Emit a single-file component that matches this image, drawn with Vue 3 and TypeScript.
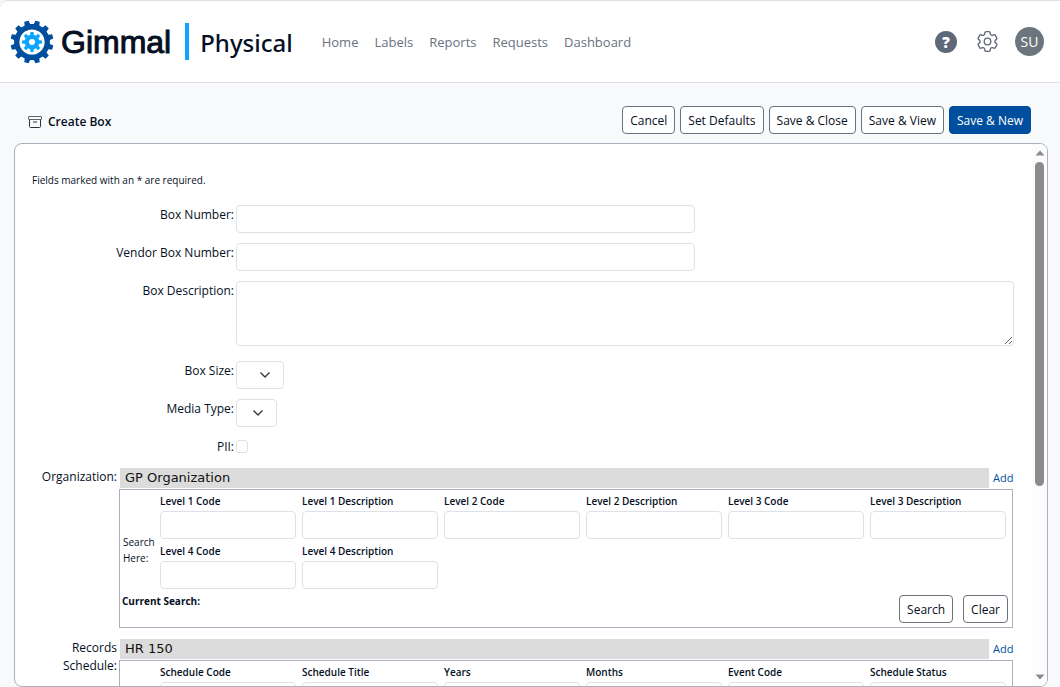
<script setup lang="ts">
import { ref } from 'vue'

interface SearchSection {
  id: string
  label: string
  value: string
  fields: string[]
}

const navLinks: string[] = ['Home', 'Labels', 'Reports', 'Requests', 'Dashboard']
const actions: string[] = ['Cancel', 'Set Defaults', 'Save & Close', 'Save & View']

const sections: SearchSection[] = [
  {
    id: 'org',
    label: 'Organization:',
    value: 'GP Organization',
    fields: [
      'Level 1 Code', 'Level 1 Description', 'Level 2 Code', 'Level 2 Description',
      'Level 3 Code', 'Level 3 Description', 'Level 4 Code', 'Level 4 Description',
    ],
  },
  {
    id: 'schedule',
    label: 'Records Schedule:',
    value: 'HR 150',
    fields: ['Schedule Code', 'Schedule Title', 'Years', 'Months', 'Event Code', 'Schedule Status'],
  },
]

const boxNumber = ref('')
const vendorBoxNumber = ref('')
const description = ref('')
const pii = ref(false)

/** Outline of a cog centred on 0,0. */
function cog(teeth: number, outer: number, root: number, offset: number): string {
  const step = (Math.PI * 2) / teeth
  const points: string[] = []
  for (let i = 0; i < teeth; i++) {
    const a = offset + i * step
    const corners: [number, number][] = [
      [root, -0.3], [outer, -0.2], [outer, 0.2], [root, 0.3],
    ]
    for (const [r, k] of corners) {
      const t = a + k * step
      points.push(`${(r * Math.sin(t)).toFixed(2)} ${(-r * Math.cos(t)).toFixed(2)}`)
    }
  }
  return `M${points.join('L')}Z`
}

const outerCog = cog(12, 21.6, 18, Math.PI / 12)
const innerCog = cog(8, 10.2, 7.4, 0)
</script>

<template>
  <div class="page">
    <header class="topbar">
      <a class="brand" href="#">
        <svg class="brand-mark" viewBox="-22 -22 44 44" aria-hidden="true">
          <path :d="outerCog" fill="#004f9e" />
          <circle r="12.6" fill="#fff" />
          <path :d="innerCog" fill="#0ba5ff" />
          <circle r="3" fill="#fff" />
        </svg>
        <span class="brand-name">Gimmal</span>
        <span class="brand-rule"></span>
        <span class="brand-product">Physical</span>
      </a>
      <nav class="nav">
        <a v-for="link in navLinks" :key="link" href="#">{{ link }}</a>
      </nav>
      <div class="tools">
        <button type="button" class="help" aria-label="Help">?</button>
        <button type="button" class="settings" aria-label="Settings">
          <svg viewBox="1.5 1.5 21 21" fill="none" stroke="currentColor" stroke-width="1.2" stroke-linejoin="round">
            <path d="M9.594 3.94c.09-.542.56-.94 1.11-.94h2.593c.55 0 1.02.398 1.11.94l.213 1.281c.063.374.313.686.645.87.074.04.147.083.22.127.325.196.72.257 1.075.124l1.217-.456a1.125 1.125 0 0 1 1.37.49l1.296 2.247a1.125 1.125 0 0 1-.26 1.431l-1.003.827c-.293.241-.438.613-.43.992a7.723 7.723 0 0 1 0 .255c-.008.378.137.75.43.991l1.004.827c.424.35.534.955.26 1.43l-1.298 2.247a1.125 1.125 0 0 1-1.369.491l-1.217-.456c-.355-.133-.75-.072-1.076.124a6.47 6.47 0 0 1-.22.128c-.331.183-.581.495-.644.869l-.213 1.281c-.09.543-.56.94-1.11.94h-2.594c-.55 0-1.019-.398-1.11-.94l-.213-1.281c-.062-.374-.312-.686-.644-.87a6.52 6.52 0 0 1-.22-.127c-.325-.196-.72-.257-1.076-.124l-1.217.456a1.125 1.125 0 0 1-1.369-.49l-1.297-2.247a1.125 1.125 0 0 1 .26-1.431l1.004-.827c.292-.24.437-.613.43-.991a6.932 6.932 0 0 1 0-.255c.007-.38-.138-.751-.43-.992l-1.004-.827a1.125 1.125 0 0 1-.26-1.43l1.297-2.247a1.125 1.125 0 0 1 1.37-.491l1.216.456c.356.133.751.072 1.076-.124.072-.044.146-.086.22-.128.332-.183.582-.495.644-.869l.214-1.28Z" />
            <circle cx="12" cy="12" r="3" />
          </svg>
        </button>
        <button type="button" class="avatar" aria-label="Account">SU</button>
      </div>
    </header>

    <div class="toolbar">
      <h1 class="title">
        <svg viewBox="0 0 14 14" fill="none" stroke="#2c3440" aria-hidden="true">
          <rect x="0.5" y="1.5" width="13" height="3" rx="0.5" stroke="#5d6470" />
          <path d="M1.5 4.5v7a1 1 0 0 0 1 1h9a1 1 0 0 0 1-1v-7M5 7h4" />
        </svg>
        Create Box
      </h1>
      <div class="actions">
        <button v-for="action in actions" :key="action" type="button" class="btn">{{ action }}</button>
        <button type="button" class="btn primary">Save &amp; New</button>
      </div>
    </div>

    <main class="panel">
      <form class="form" @submit.prevent>
        <p class="note">Fields marked with an * are required.</p>

        <div class="rows">
          <label for="box-number">Box Number:</label>
          <input id="box-number" v-model="boxNumber" class="control medium" type="text" />

          <label for="vendor-number">Vendor Box Number:</label>
          <input id="vendor-number" v-model="vendorBoxNumber" class="control medium" type="text" />

          <label for="description">Box Description:</label>
          <textarea id="description" v-model="description" class="control area"></textarea>

          <label for="box-size">Box Size:</label>
          <span class="picker wide">
            <select id="box-size" class="control"><option></option></select>
            <svg viewBox="0 0 12 8" aria-hidden="true"><path d="M1.5 1.5 6 6l4.500-4.500" /></svg>
          </span>

          <label for="media-type">Media Type:</label>
          <span class="picker">
            <select id="media-type" class="control"><option></option></select>
            <svg viewBox="0 0 12 8" aria-hidden="true"><path d="M1.5 1.5 6 6l4.500-4.500" /></svg>
          </span>

          <label for="pii">PII:</label>
          <input id="pii" v-model="pii" class="tick" type="checkbox" />
        </div>

        <section v-for="section in sections" :key="section.id" class="lookup">
          <h2 class="lookup-label">{{ section.label }}</h2>
          <div class="lookup-body">
            <div class="lookup-head">
              <span class="lookup-value">{{ section.value }}</span>
              <a href="#">Add</a>
            </div>
            <div class="search">
              <div class="search-main">
                <span class="search-hint">Search Here:</span>
                <div class="search-grid">
                  <label v-for="field in section.fields" :key="field" class="search-field">
                    {{ field }}
                    <input class="control" type="text" />
                  </label>
                </div>
              </div>
              <div class="search-foot">
                <strong>Current Search:</strong>
                <div class="search-buttons">
                  <button type="button" class="btn">Search</button>
                  <button type="button" class="btn">Clear</button>
                </div>
              </div>
            </div>
          </div>
        </section>
      </form>

      <div class="scroll" aria-hidden="true">
        <svg viewBox="0 0 10 6"><path d="M5 0.500 9.500 5.500h-9z" /></svg>
        <div class="track"><div class="thumb"></div></div>
        <svg viewBox="0 0 10 6"><path d="M0.500 0.500h9L5 5.500z" /></svg>
      </div>
    </main>
  </div>
</template>

<style>
body {
  background: #f8f9fb;
}
</style>

<style scoped>
.page,
.page * {
  box-sizing: border-box;
}

.page {
  display: flex;
  flex-direction: column;
  height: 100vh;
  overflow: hidden;
  color: #050f24;
  font: 12px/18px "Open Sans", "Noto Sans", sans-serif;
}

button,
input,
select,
textarea {
  font: inherit;
  color: inherit;
}

button {
  cursor: pointer;
}

a {
  text-decoration: none;
}

.topbar {
  display: flex;
  flex: none;
  align-items: center;
  height: 83px;
  padding: 0 16px 0 10px;
  background: #fff;
  border: solid #dfe1e5;
  border-width: 1px 0;
  border-top-left-radius: 8px;
}

.brand {
  display: flex;
  align-items: center;
  color: #050f24;
}

.brand-mark {
  width: 44px;
  height: 44px;
}

.brand-name {
  margin-left: 7px;
  font: 32px/40px "Liberation Sans", sans-serif;
  -webkit-text-stroke: 1px currentColor;
}

.brand-rule {
  width: 4px;
  height: 37px;
  margin: 0 11px 0 14px;
  background: #0ba5ff;
}

.brand-product {
  padding-top: 2px;
  font-family: "Noto Sans", sans-serif;
  font-size: 24px;
  font-weight: 500;
  line-height: 36px;
}

.nav {
  display: flex;
  flex: 1;
  gap: 16px;
  margin-left: 29px;
  font-size: 13px;
}

.nav a {
  color: #6a7280;
}

.tools {
  display: flex;
  align-items: center;
}

.tools button {
  display: grid;
  place-items: center;
  padding: 0;
  border: 0;
  border-radius: 50%;
}

.help {
  width: 22px;
  height: 22px;
  background: #5f6878;
  color: #fff;
  font-size: 15px;
  font-weight: 800;
}

.settings {
  width: 23px;
  height: 23px;
  margin: 0 16px 0 19px;
  background: none;
  color: #5f6878;
}

.settings svg {
  width: 23px;
  height: 23px;
}

.avatar {
  width: 29px;
  height: 29px;
  background: #6c757d;
  color: #fff;
  font-size: 14px;
}

.toolbar {
  display: flex;
  flex: none;
  align-items: center;
  justify-content: space-between;
  padding: 23px 29px 9px 28px;
}

.title {
  display: flex;
  align-items: center;
  gap: 6px;
  margin: 0;
  padding-top: 3px;
  font-size: 12px;
  font-weight: 600;
}

.title svg {
  width: 14px;
  height: 14px;
}

.actions {
  display: flex;
  gap: 5px;
}

.btn {
  height: 28px;
  padding: 1px 7px 0;
  background: #fff;
  border: 1px solid #6c757d;
  border-radius: 4px;
  white-space: nowrap;
}

.btn.primary {
  background: #004f9e;
  border-color: #004f9e;
  color: #fff;
}

.panel {
  display: flex;
  flex: 1;
  min-height: 0;
  margin: 0 12px 0 14px;
  overflow: hidden;
  background: #fff;
  border: 1px solid #a9b2bc;
  border-radius: 8px;
}

.form {
  flex: 1;
  min-width: 0;
  padding: 28px 18px 0 17px;
  overflow-y: auto;
  scrollbar-width: none;
}

.note {
  margin: 0 0 17px;
  font-size: 10px;
  line-height: 16px;
}

.rows {
  display: grid;
  grid-template-columns: 202px 1fr;
  gap: 10px 2px;
  align-items: start;
  margin-bottom: 12px;
}

.rows > label {
  padding-top: 1px;
  text-align: right;
}

.control {
  display: block;
  width: 100%;
  height: 28px;
  margin: 0;
  padding: 0 8px;
  background: #fff;
  border: 1px solid #dee2e6;
  border-radius: 4px;
}

.control.medium {
  width: 59%;
}

.control.area {
  height: 65px;
  margin-bottom: 5px;
  resize: vertical;
}

.picker {
  display: grid;
  width: 41px;
  align-items: center;
  justify-items: end;
}

.picker.wide {
  width: 48px;
}

.picker > * {
  grid-area: 1 / 1;
}

.picker select {
  appearance: none;
}

.picker svg {
  width: 12px;
  height: 8px;
  margin-right: 13px;
  fill: none;
  stroke: #343a40;
  stroke-width: 1.4;
  pointer-events: none;
}

.tick {
  width: 12px;
  height: 13px;
  margin: 3px 0 0;
  appearance: none;
  background: #fff;
  border: 1px solid #dee2e6;
  border-radius: 3px;
}

.tick:checked {
  background: #004f9e;
}

.lookup {
  display: grid;
  grid-template-columns: 85px 1fr;
  gap: 2px;
  margin: 0 1px 11px 0;
}

.lookup-label {
  margin: 0;
  font-size: 12px;
  font-weight: 400;
  line-height: 18px;
  text-align: right;
}

.lookup-head {
  display: grid;
  grid-template-columns: 1fr 20px;
  gap: 4px;
  height: 20px;
  margin: 0 0 1px 1px;
  line-height: 20px;
}

.lookup-head a {
  color: #004f9e;
  font-size: 11px;
}

.lookup-value {
  padding-left: 5px;
  background: #dcdcdc;
  color: #111;
  font-family: "DejaVu Sans", sans-serif;
  font-size: 13px;
}

.search {
  padding: 1px 4px 4px 2px;
  border: 1px solid #a9b2bc;
}

.search-main {
  display: grid;
  grid-template-columns: 37px 1fr;
  align-items: center;
  min-height: 100px;
  padding: 0 2px 2px 1px;
}

.search-hint {
  padding-top: 20px;
  font-size: 10px;
  line-height: 16px;
}

.search-grid {
  display: grid;
  grid-template-columns: repeat(6, 1fr);
  gap: 2px 6px;
  align-self: start;
}

.search-field {
  min-width: 0;
  font-size: 10px;
  font-weight: 600;
  line-height: 20px;
}

.search-foot {
  display: flex;
  justify-content: space-between;
  font-size: 10px;
  line-height: 20px;
}

.search-buttons {
  display: flex;
  gap: 10px;
  margin-top: 4px;
  font-size: 12px;
}

.scroll {
  display: flex;
  flex: none;
  flex-direction: column;
  align-items: center;
  width: 15px;
  padding: 6px 0;
  background: #fcfcfc;
}

.scroll svg {
  width: 10px;
  height: 6px;
  fill: #8b8b8b;
}

.track {
  flex: 1;
  padding: 6px 0;
}

.thumb {
  width: 9px;
  height: 64%;
  background: #8b8b8b;
  border-radius: 5px;
}
</style>
